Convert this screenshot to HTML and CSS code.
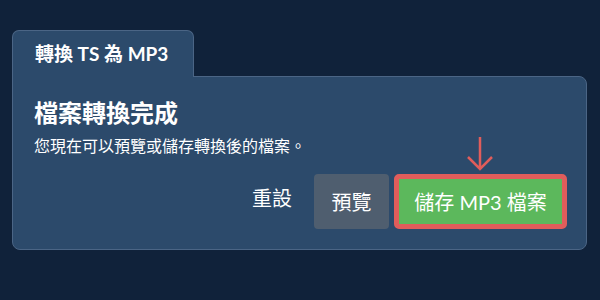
FILE: index.html
```html
<!DOCTYPE html>
<html lang="zh-Hant">
<head>
    <meta charset="UTF-8">
    <title>轉換 TS 為 MP3</title>
    <link rel="stylesheet" href="styles.css">
</head>
<body>
    <div class="wrap">
        <div class="tab">轉換 TS 為 MP3</div>
        <div class="panel">
            <h1 class="title">檔案轉換完成</h1>
            <p class="desc">您現在可以預覽或儲存轉換後的檔案。</p>
            <div class="actions">
                <button class="btn reset">重設</button>
                <button class="btn preview">預覽</button>
                <div class="save-box">
                    <svg class="arrow" width="28" height="36" viewBox="0 0 28 36">
                        <path d="M14 1 V33 M2 21 L14 33 L26 21" fill="none" stroke="#e05d5b" stroke-width="2.5"/>
                    </svg>
                    <button class="btn save">儲存 MP3 檔案</button>
                </div>
            </div>
        </div>
    </div>
</body>
</html>
```

FILE: styles.css
```css
html, body { margin: 0; background: #10223a; }
body { font-family: "Lato", "Noto Sans CJK TC", sans-serif; color: #fff; }
.wrap { width: 575px; padding: 30px 0 0 12px; }
.tab { display: inline-block; position: relative; z-index: 1; margin-bottom: -1px; height: 46px; line-height: 46px; padding: 0 22px 0 22px; width: 136px; background: #2c4a6b; border: 1px solid #4b6585; border-bottom: none; border-radius: 7px 7px 0 0; font-size: 19px; font-weight: 700; white-space: nowrap; }
.panel { background: #2c4a6b; border: 1px solid #4b6585; border-radius: 0 8px 8px 8px; padding: 19px 19px 20px 21px; }
.title { margin: 0; font-size: 24px; font-weight: 700; line-height: 34px; }
.desc { margin: 4px 0 0; font-size: 16px; line-height: 24px; }
.actions { display: flex; justify-content: flex-end; align-items: center; margin-top: 16px; }
.btn { font-family: inherit; color: #fff; border: none; font-size: 20px; cursor: pointer; }
.reset { background: none; padding: 0 22px 0 0; margin-bottom: 8px; }
.preview { background: #4f5e6f; border-radius: 4px; width: 75px; height: 55px; }
.save-box { position: relative; margin-left: 5px; }
.save { display: block; background: #5cb85c; border: 5px solid #e05d5b; border-radius: 5px; width: 173px; height: 55px; padding: 0; font-size: 20px; }
.arrow { position: absolute; left: 72px; top: -38px; }
```
